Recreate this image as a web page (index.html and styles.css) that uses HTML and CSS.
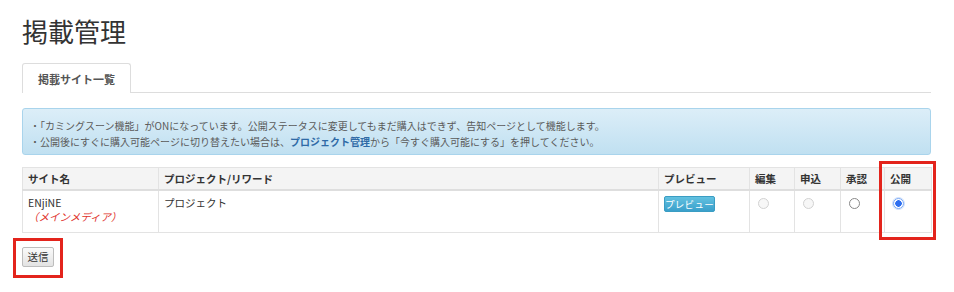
FILE: index.html
```html
<!DOCTYPE html>
<html lang="ja">
<head>
<meta charset="utf-8">
<title>掲載管理</title>
<link rel="stylesheet" href="styles.css">
</head>
<body>
<div class="page">
  <h1 class="title">掲載管理</h1>
  <ul class="tabs">
    <li class="tab active">掲載サイト一覧</li>
  </ul>
  <div class="alert">
    <p>・「カミングスーン機能」がONになっています。公開ステータスに変更してもまだ購入はできず、告知ページとして機能します。</p>
    <p>・公開後にすぐに購入可能ページに切り替えたい場合は、<a class="alert-link">プロジェクト管理</a>から「今すぐ購入可能にする」を押してください。</p>
  </div>
  <div class="table-wrap">
    <table class="grid">
      <colgroup>
        <col class="c-site"><col class="c-proj"><col class="c-prev"><col class="c-sm"><col class="c-sm2"><col class="c-sm3"><col class="c-pub">
      </colgroup>
      <thead>
        <tr>
          <th>サイト名</th>
          <th>プロジェクト/リワード</th>
          <th>プレビュー</th>
          <th>編集</th>
          <th>申込</th>
          <th>承認</th>
          <th>公開</th>
        </tr>
      </thead>
      <tbody>
        <tr>
          <td>ENjiNE<br><span class="main-media">（メインメディア）</span></td>
          <td>プロジェクト</td>
          <td><button class="btn-preview">プレビュー</button></td>
          <td><span class="radio disabled"></span></td>
          <td><span class="radio disabled"></span></td>
          <td><span class="radio"></span></td>
          <td><span class="radio checked"></span></td>
        </tr>
      </tbody>
    </table>
    <div class="mark mark-pub"></div>
  </div>
  <div class="submit-row">
    <button class="btn-submit">送信</button>
    <div class="mark mark-submit"></div>
  </div>
</div>
</body>
</html>
```

FILE: styles.css
```css
html, body {
  margin: 0;
  padding: 0;
  background: #fff;
}
body {
  font-family: "Noto Sans CJK JP", "Noto Sans", sans-serif;
  font-size: 11px;
  color: #333;
}
.page {
  width: 909px;
  padding: 14px 0 24px 22px;
}
.title {
  margin: 0;
  font-size: 26px;
  font-weight: normal;
  line-height: 34px;
  color: #333;
}
.tabs {
  list-style: none;
  margin: 15px 0 0;
  padding: 0;
  border-bottom: 1px solid #ddd;
  display: flex;
  height: 29px;
}
.tab {
  width: 109px;
  box-sizing: border-box;
  border: 1px solid #ddd;
  border-bottom: none;
  border-radius: 3px 3px 0 0;
  background: #fff;
  margin-bottom: -1px;
  height: 30px;
  font-weight: bold;
  font-size: 11px;
  color: #555;
  display: flex;
  align-items: center;
  justify-content: center;
}
.alert {
  margin-top: 15px;
  height: 47px;
  box-sizing: border-box;
  border: 1px solid #a9d4ec;
  border-radius: 3px;
  background: linear-gradient(#dceef8, #c0e0f1);
  padding: 9px 8px 5px 7px;
  color: #5a5a5a;
  font-size: 10px;
  line-height: 16px;
}
.alert p {
  margin: 0;
  white-space: nowrap;
}
.alert-link {
  font-weight: bold;
  color: #2f6aa6;
}
.table-wrap {
  position: relative;
  margin-top: 12px;
}
.grid {
  width: 909px;
  border-collapse: collapse;
  table-layout: fixed;
}
.c-site { width: 136px; }
.c-proj { width: 500px; }
.c-prev { width: 91px; }
.c-sm { width: 45px; }
.c-sm2 { width: 46px; }
.c-sm3 { width: 44px; }
.c-pub { width: 47px; }
.grid th, .grid td {
  border: 1px solid #e3e3e3;
  text-align: left;
  vertical-align: top;
  padding: 0 5px;
}
.grid th {
  background: #f4f4f4;
  font-weight: bold;
  font-size: 10.5px;
  color: #333;
  height: 21px;
  line-height: 21px;
  border-bottom: 2px solid #dedede;
}
.grid td {
  height: 42px;
  box-sizing: border-box;
  padding-top: 5px;
  line-height: 14px;
  color: #333;
  font-size: 10.5px;
}
.main-media {
  color: #e0302a;
  font-style: italic;
}
.btn-preview {
  margin-top: 0;
  width: 51px;
  height: 16px;
  padding: 0;
  border: 1px solid #3a9dc3;
  border-radius: 2px;
  background: linear-gradient(#62c1e0, #3aa0cb);
  color: #fff;
  font-family: inherit;
  font-size: 9.5px;
  line-height: 14px;
  letter-spacing: 0.3px;
}
.radio {
  display: inline-block;
  box-sizing: border-box;
  width: 11px;
  height: 11px;
  margin: 2px 0 0 3px;
  border-radius: 50%;
  border: 1px solid #888;
  background: #fff;
}
.radio.disabled {
  border-color: #d2d2d2;
  background: #f7f7f7;
}
.radio.checked {
  border: 1px solid #7aa8f5;
  background: radial-gradient(circle, #2f6ff0 0 3px, #fff 3.5px);
  box-shadow: 0 0 0 1px #cfe0fb;
}
.submit-row {
  position: relative;
  margin-top: 14px;
  height: 20px;
}
.btn-submit {
  display: block;
  width: 32px;
  height: 20px;
  padding: 0;
  border: 1px solid #bdbdbd;
  border-radius: 2px;
  background: linear-gradient(#fafafa, #e3e3e3);
  font-family: inherit;
  font-size: 10.5px;
  color: #333;
}
.mark {
  position: absolute;
  border: 3px solid #e3241c;
  box-sizing: border-box;
}
.mark-pub {
  left: 857px;
  top: -6px;
  width: 57px;
  height: 79px;
}
.mark-submit {
  left: -9px;
  top: -9px;
  width: 50px;
  height: 40px;
}
```
